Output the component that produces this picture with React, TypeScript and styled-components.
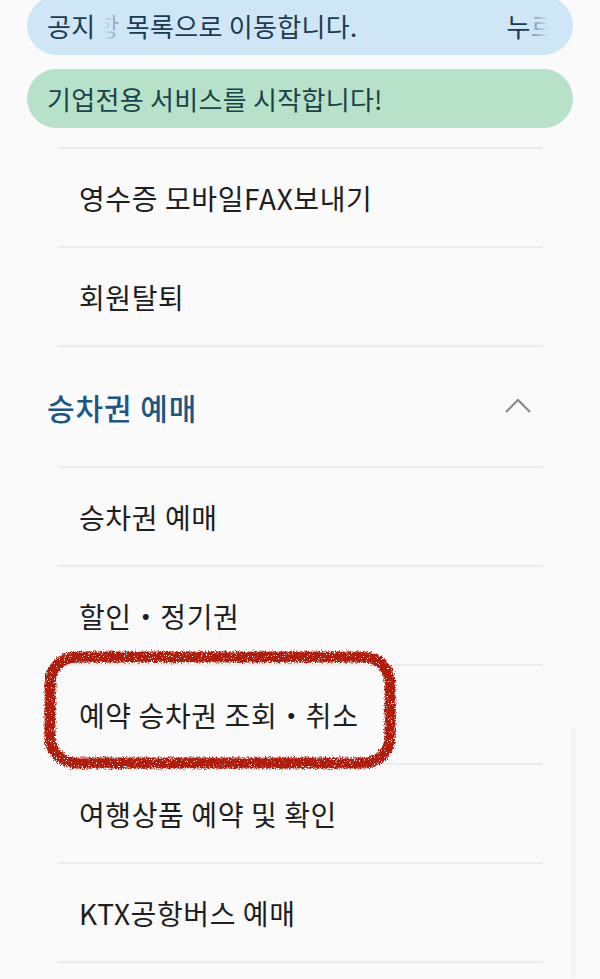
import React from 'react';
import styled, { createGlobalStyle } from 'styled-components';

const GlobalStyle = createGlobalStyle`
  html, body {
    margin: 0;
    padding: 0;
    background: #fafafa;
  }
  body {
    font-family: "Noto Sans CJK KR", "Noto Sans", sans-serif;
    -webkit-font-smoothing: antialiased;
  }
`;

const Page = styled.div`
  position: relative;
  width: 600px;
  height: 979px;
  overflow: hidden;
  background: #fafafa;
`;

const Notices = styled.div`
  display: flex;
  flex-direction: column;
  gap: 14px;
  padding: 0 27px;
  margin-top: -4px;
`;

const Pill = styled.div<{ $tone: 'blue' | 'green' }>`
  display: flex;
  align-items: center;
  height: 59px;
  padding: 0 18px 0 20px;
  border-radius: 30px;
  background: ${(p) => (p.$tone === 'blue' ? '#cfe6f6' : '#b8e1ca')};
  color: ${(p) => (p.$tone === 'blue' ? '#1b3b52' : '#17434a')};
  font-size: 26px;
  letter-spacing: 0.3px;
  white-space: nowrap;
  overflow: hidden;
`;

const Ticker = styled.span`
  margin-left: auto;
`;

const Fade = styled.span<{ $dir: 'in' | 'out' }>`
  -webkit-mask-image: ${(p) =>
    p.$dir === 'in'
      ? 'linear-gradient(to right, transparent 35%, rgba(0,0,0,0.45) 100%)'
      : 'linear-gradient(to right, rgba(0,0,0,0.5) 0%, transparent 70%)'};
  mask-image: ${(p) =>
    p.$dir === 'in'
      ? 'linear-gradient(to right, transparent 35%, rgba(0,0,0,0.45) 100%)'
      : 'linear-gradient(to right, rgba(0,0,0,0.5) 0%, transparent 70%)'};
`;

const Menu = styled.nav`
  display: flex;
  flex-direction: column;
  margin-top: 19px;
`;

const Divider = styled.div`
  height: 2px;
  margin: 0 57px 0 58px;
  background: #ececec;
`;

const Item = styled.div<{ $header?: boolean }>`
  position: relative;
  display: flex;
  align-items: center;
  justify-content: space-between;
  height: ${(p) => (p.$header ? 119 : 97)}px;
  padding: 0 69px 0 ${(p) => (p.$header ? 47 : 79)}px;
  font-size: ${(p) => (p.$header ? 30 : 28)}px;
  font-weight: ${(p) => (p.$header ? 500 : 400)};
  color: ${(p) => (p.$header ? '#1d5684' : '#1e1e1e')};
  letter-spacing: ${(p) => (p.$header ? 0.9 : 0.6)}px;
`;

const Chevron = styled.svg`
  width: 26px;
  height: 14px;
  margin-top: -2px;
`;

const Marker = styled.svg`
  position: absolute;
  left: 41px;
  top: -18px;
  width: 358px;
  height: 124px;
  pointer-events: none;
`;

const ScrollThumb = styled.div`
  position: absolute;
  right: 24px;
  top: 727px;
  bottom: 0;
  width: 6px;
  border-radius: 3px;
  background: rgba(0, 0, 0, 0.025);
`;

const RedMarker = () => (
  <Marker viewBox="0 0 358 124">
    <defs>
      <filter id="rough" x="-5%" y="-10%" width="110%" height="120%">
        <feTurbulence type="fractalNoise" baseFrequency="0.7" numOctaves="3" seed="4" result="noise" />
        <feDisplacementMap in="SourceGraphic" in2="noise" scale="6" xChannelSelector="R" yChannelSelector="G" result="moved" />
        <feTurbulence type="fractalNoise" baseFrequency="1.4" numOctaves="2" seed="9" result="grain" />
        <feColorMatrix
          in="grain"
          type="matrix"
          values="0 0 0 0 1  0 0 0 0 1  0 0 0 0 1  0 0 0 14 -9.2"
          result="holes"
        />
        <feComposite in="moved" in2="holes" operator="out" />
      </filter>
    </defs>
    <rect
      x="9"
      y="9"
      width="340"
      height="106"
      rx="26"
      fill="none"
      stroke="#b11d0b"
      strokeWidth="11"
      filter="url(#rough)"
    />
  </Marker>
);

const accountItems = ['영수증 모바일FAX보내기', '회원탈퇴'];
const ticketItems = [
  '승차권 예매',
  '할인・정기권',
  '예약 승차권 조회・취소',
  '여행상품 예약 및 확인',
  'KTX공항버스 예매',
];

export default function App() {
  return (
    <Page>
      <GlobalStyle />
      <Notices>
        <Pill $tone="blue">
          공지 <Fade $dir="in">항</Fade>&nbsp;목록으로 이동합니다.
          <Ticker>
            누<Fade $dir="out">르</Fade>
          </Ticker>
        </Pill>
        <Pill $tone="green">기업전용 서비스를 시작합니다!</Pill>
      </Notices>

      <Menu>
        {accountItems.map((label) => (
          <React.Fragment key={label}>
            <Divider />
            <Item>{label}</Item>
          </React.Fragment>
        ))}
        <Divider />
        <Item $header>
          승차권 예매
          <Chevron viewBox="0 0 26 14">
            <polyline points="1,13 13,1 25,13" fill="none" stroke="#8a8a8a" strokeWidth="2.2" />
          </Chevron>
        </Item>
        {ticketItems.map((label) => (
          <React.Fragment key={label}>
            <Divider />
            <Item>
              {label}
              {label === '예약 승차권 조회・취소' && <RedMarker />}
            </Item>
          </React.Fragment>
        ))}
        <Divider />
      </Menu>
      <ScrollThumb />
    </Page>
  );
}
